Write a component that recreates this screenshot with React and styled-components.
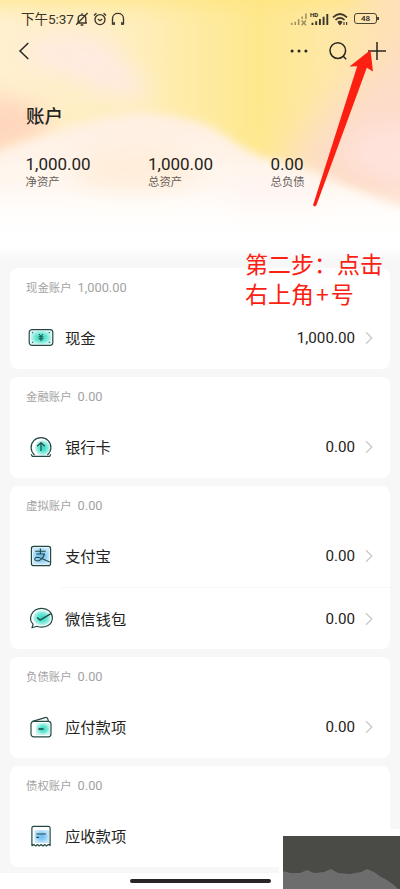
import styled, { createGlobalStyle } from 'styled-components';

const summary = [
  { value: '1,000.00', label: '净资产' },
  { value: '1,000.00', label: '总资产' },
  { value: '0.00', label: '总负债' },
];

const groups = [
  { title: '现金账户', total: '1,000.00', rows: [{ icon: 'cash', name: '现金', amount: '1,000.00' }] },
  { title: '金融账户', total: '0.00', rows: [{ icon: 'bank', name: '银行卡', amount: '0.00' }] },
  {
    title: '虚拟账户',
    total: '0.00',
    rows: [
      { icon: 'alipay', name: '支付宝', amount: '0.00' },
      { icon: 'wechat', name: '微信钱包', amount: '0.00' },
    ],
  },
  { title: '负债账户', total: '0.00', rows: [{ icon: 'wallet', name: '应付款项', amount: '0.00' }] },
  { title: '债权账户', total: '0.00', rows: [{ icon: 'receipt', name: '应收款项' }] },
];

const icons = {
  cash: (
    <>
      <rect x="3.5" y="6.5" width="21" height="14" rx="2" fill="url(#teal)" stroke="none" />
      <rect x="2.2" y="5.6" width="23.6" height="15.8" rx="2.8" />
      <path d="M12 10l2 2.4 2-2.4M11.6 12.8h4.8M11.6 14.8h4.8M14 12.6v4.6" strokeWidth="1" />
      <path d="M5.2 8.6h1M21.8 8.6h1M5.2 18.4h1M21.8 18.4h1" strokeWidth="1.3" />
    </>
  ),
  bank: (
    <>
      <circle cx="15.6" cy="14.8" r="7.6" fill="url(#teal)" stroke="none" />
      <path d="M7.6 22a9.9 9.9 0 1 1 12.8 0M4.2 21.2l1 2.1h17.6l1-2.1" />
      <path d="M14 18v-8M10.2 13.2l3.8-3.6 3.8 3.6" />
    </>
  ),
  alipay: (
    <>
      <rect x="5.5" y="5.5" width="17" height="17" fill="url(#blue)" stroke="none" />
      <rect x="4.4" y="4.4" width="19.2" height="19.2" rx="2.2" />
      <path d="M8.2 9.2h10.5M13.4 6.6v5.2M9.3 12h8.2c-1 3.4-4.2 7.2-7.5 7-3.3-.4-2.7-3.8.5-3.8 3.2.2 6.8 2.7 12.3 4.7" strokeWidth="1.1" />
    </>
  ),
  wechat: (
    <>
      <ellipse cx="15" cy="14" rx="9" ry="7.5" fill="url(#teal)" stroke="none" />
      <path d="M6.1 20.2C1 15 4 4.6 14.7 4.4c6.2 0 10.7 4.2 10.7 9.3 0 7.5-8 11.2-15.4 8.6L5 23.8z" />
      <path d="M10.2 13.4l2.8 2.7L24 9.6" strokeWidth="1.4" />
    </>
  ),
  wallet: (
    <>
      <rect x="9" y="10" width="14" height="12" rx="1.5" fill="url(#teal)" stroke="none" />
      <rect x="4" y="8.3" width="20" height="15.5" rx="2.8" />
      <path d="M5.5 8.4l12.7-3.8c1.4-.4 2.2.2 2.6 1.4l.6 2.2" />
      <path d="M11.5 16h5" strokeWidth="1.6" />
    </>
  ),
  receipt: (
    <>
      <rect x="7.5" y="8" width="14.5" height="13" rx="1" fill="url(#blue)" stroke="none" />
      <path d="M4.9 23.6V6.1c0-1.1.7-1.8 1.8-1.8h14.6c1.1 0 1.8.7 1.8 1.8v17.5l-1.8-1-1.8 1.3-1.8-1.3-1.8 1.3-1.8-1.3-1.8 1.3-1.8-1.3-1.8 1.3-1.8-1.3z" />
      <path d="M9.3 12h9.6M9.3 15.4h2.8" />
    </>
  ),
};

const HeaderArt = () => (
  <Art viewBox="0 0 400 268" preserveAspectRatio="none">
    <defs>
      <linearGradient id="base" x1="0" x2="1">
        <stop offset="0" stopColor="#fff0cf" />
        <stop offset=".34" stopColor="#ffeebc" />
        <stop offset=".5" stopColor="#feeba2" />
        <stop offset=".65" stopColor="#fee88e" />
        <stop offset=".82" stopColor="#fee8a6" />
        <stop offset="1" stopColor="#fee0b9" />
      </linearGradient>
      <linearGradient id="wave" x1="0" y1="110" x2="0" y2="240" gradientUnits="userSpaceOnUse">
        <stop offset="0" stopColor="#ffeee0" />
        <stop offset=".4" stopColor="#fff4ea" />
        <stop offset="1" stopColor="#fff" />
      </linearGradient>
      <linearGradient id="fade" x1="0" y1="185" x2="0" y2="250" gradientUnits="userSpaceOnUse">
        <stop offset="0" stopColor="#fff" stopOpacity="0" />
        <stop offset="1" stopColor="#fff" />
      </linearGradient>
      <linearGradient id="floor" x1="0" y1="247" x2="0" y2="262" gradientUnits="userSpaceOnUse">
        <stop offset="0" stopColor="#f7f7f7" stopOpacity="0" />
        <stop offset="1" stopColor="#f7f7f7" />
      </linearGradient>
      <filter id="b5" x="-50%" y="-50%" width="200%" height="200%"><feGaussianBlur stdDeviation="5" /></filter>
      <filter id="b12" x="-50%" y="-50%" width="200%" height="200%"><feGaussianBlur stdDeviation="12" /></filter>
      <filter id="b20" x="-50%" y="-50%" width="200%" height="200%"><feGaussianBlur stdDeviation="20" /></filter>
    </defs>
    <rect width="400" height="268" fill="url(#base)" />
    <path d="M-40-40h400V2H-40z" fill="#fee47a" opacity=".9" filter="url(#b12)" />
    <path d="M20 48Q85 12 118 50T150 100L100 95Q70 74 20 62z" fill="#ffebe0" filter="url(#b12)" />
    <path d="M-30 98Q10 92 34 108T50 134L-30 165z" fill="#ffd3bb" opacity=".9" filter="url(#b12)" />
    <path d="M440 45Q350 75 318 125T262 160L330 200 440 225z" fill="#fddccb" filter="url(#b20)" />
    <path d="M430 122Q345 128 345 150T430 196z" fill="#ffe3dc" filter="url(#b12)" />
    <path d="M-30 164Q35 136 90 121T190 120C225 126 235 151 275 161S345 186 430 218V300H-30z" fill="url(#wave)" filter="url(#b5)" />
    <ellipse cx="135" cy="170" rx="62" ry="22" fill="#ffead2" opacity=".7" filter="url(#b12)" />
    <ellipse cx="275" cy="192" rx="50" ry="18" fill="#fff4f1" filter="url(#b12)" />
    <rect y="185" width="400" height="83" fill="url(#fade)" />
    <rect y="247" width="400" height="21" fill="url(#floor)" />
  </Art>
);

const App = () => {
  return (
    <Screen>
      <GlobalStyle />
      <Defs>
        <radialGradient id="teal">
          <stop offset="0" stopColor="#2fdcc2" />
          <stop offset=".5" stopColor="#5fe5d2" />
          <stop offset="1" stopColor="#c9f6f0" />
        </radialGradient>
        <radialGradient id="blue">
          <stop offset="0" stopColor="#6bbcf2" />
          <stop offset=".55" stopColor="#8ecdf6" />
          <stop offset="1" stopColor="#c5e6fb" />
        </radialGradient>
      </Defs>
      <Header>
        <HeaderArt />
        <StatusBar>
          <Time>下午5:37</Time>
          <StatusLeft>
            <svg width="14" height="14" viewBox="0 0 14 14">
              <path d="M2 11h10M3.2 10.6V6.2C3.2 2 10.8 2 10.8 6.2v4.4M5.6 13h2.8M7 1.2v1.4M12.6 1L1.2 12.8" />
            </svg>
            <svg width="14" height="14" viewBox="0 0 14 14">
              <circle cx="7" cy="7.6" r="5" />
              <path d="M1 3.4L3.4 1.2M13 3.4l-2.4-2.2M4.9 7l2.1 1.7L9.3 7" />
            </svg>
            <svg width="14" height="14" viewBox="0 0 14 14">
              <path d="M3 12H1.5V6.6C1.5-.4 12.5-.4 12.5 6.6V12H11M3.2 10v3M10.8 10v3" />
            </svg>
          </StatusLeft>
          <StatusRight>
            <Signal $dim viewBox="0 0 18 14">
              <path d="M1.7 13v-2.3M5.2 13V9.7M8.6 13V7.2M12.2 7V4.5M15.9 7V1.5" />
              <path d="M11.6 8.6l4.4 4.6M16 8.6l-4.4 4.6" strokeWidth="1.2" />
            </Signal>
            <Carrier>
              <Hd>HD</Hd>
              <Signal viewBox="0 0 18 14">
                <path d="M1.5 13v-2.3M5.2 13V9.2M8.9 13V7M12.6 13V4.8M16.3 13V2" />
              </Signal>
            </Carrier>
            <svg width="17" height="14" viewBox="0 0 17 14">
              <path d="M1 5.3Q8-1.3 15 5.3M3.5 8Q8 3.8 12.5 8M6 10.5Q8 8.7 10 10.5" strokeWidth="1.7" />
              <path d="M7 11.2h2L8 12.5z" />
              <path d="M12 10v3M14.6 10v3" strokeWidth="1.1" />
            </svg>
            <Battery>48</Battery>
          </StatusRight>
        </StatusBar>
        <NavBar>
          <svg width="12" height="18" viewBox="0 0 12 18"><path d="M10.3 1L2 9l8.3 8" /></svg>
          <NavActions>
            <svg width="18" height="18" viewBox="0 0 18 18">
              <path d="M2.1 9h.01M9 9h.01M15.9 9h.01" strokeWidth="3" strokeLinecap="round" />
            </svg>
            <svg width="18" height="18" viewBox="0 0 18 18">
              <circle cx="8.8" cy="8.6" r="7.8" />
              <path d="M14 14l3.2 3.2" />
            </svg>
            <svg width="18" height="18" viewBox="0 0 18 18"><path d="M9 0v18M0 9h18" /></svg>
          </NavActions>
        </NavBar>
        <Title>账户</Title>
        <Summary>
          {summary.map((item) => (
            <div key={item.label}>
              <SummaryValue>{item.value}</SummaryValue>
              <SummaryLabel>{item.label}</SummaryLabel>
            </div>
          ))}
        </Summary>
      </Header>

      <Groups>
        {groups.map((group) => (
          <Card key={group.title}>
            <CardHead>
              {group.title}
              <span>{group.total}</span>
            </CardHead>
            {group.rows.map((row) => (
              <Row key={row.name}>
                <AccountIcon viewBox="0 0 28 28">{icons[row.icon]}</AccountIcon>
                <RowBody>
                  <Name>{row.name}</Name>
                  {row.amount && (
                    <>
                      <Amount>{row.amount}</Amount>
                      <Chevron viewBox="0 0 8 14"><path d="M1 1.3L6.8 7 1 12.7" /></Chevron>
                    </>
                  )}
                </RowBody>
              </Row>
            ))}
          </Card>
        ))}
      </Groups>
      <HomeArea>
        <HomeBar />
      </HomeArea>

      <Arrow viewBox="0 0 70 160">
        <path d="M60.5 1L63 22.5l-6.2-3.8L6.5 156q-1.6 2.6-3.5.3L47.2 17.2l-7.7.2z" />
      </Arrow>
      <Note>
        <span>第二步：点击</span>
        <span>右上角<Plus>+</Plus>号</span>
      </Note>
      <Thumb>
        <svg width="117" height="53" viewBox="0 0 117 53">
          <path d="M0 35l7 2h10l7-3 7 3 10-1 7-3 7 4 12 1 11-2 6-3 7 3 7 5 6 3 7 5 4 4H0z" />
        </svg>
      </Thumb>
    </Screen>
  );
};

const GlobalStyle = createGlobalStyle`
  * {
    box-sizing: border-box;
  }
  body {
    margin: 0;
    background: #fff;
    font-family: Roboto, 'Noto Sans CJK SC', sans-serif;
    color: #242321;
  }
  svg {
    display: block;
    flex: none;
  }
`;

const Screen = styled.main`
  position: relative;
  width: 400px;
  height: 889px;
  overflow: hidden;
  display: flex;
  flex-direction: column;
  background: #f7f7f7;
`;

const Defs = styled.svg`
  position: absolute;
  width: 0;
  height: 0;
`;

const Header = styled.header`
  position: relative;
  height: 268px;
  flex: none;
  isolation: isolate;
`;

const Art = styled.svg`
  position: absolute;
  inset: 0;
  width: 100%;
  height: 100%;
  z-index: -1;
`;

const StatusBar = styled.div`
  height: 36px;
  padding: 1px 19px 0 21px;
  display: flex;
  align-items: center;
  svg {
    fill: none;
    stroke: #3b3629;
    stroke-width: 1.35;
  }
`;

const Time = styled.span`
  width: 54px;
  padding-bottom: 1px;
  white-space: nowrap;
  font-size: 13.6px;
  letter-spacing: -0.1px;
  color: #3b3629;
`;

const StatusLeft = styled.div`
  display: flex;
  gap: 4px;
`;

const StatusRight = styled.div`
  margin-left: auto;
  display: flex;
  align-items: center;
  gap: 3px;
`;

const Signal = styled.svg`
  width: 18px;
  height: 14px;
  opacity: ${({ $dim }) => ($dim ? 0.5 : 1)};
  path {
    stroke-width: ${({ $dim }) => ($dim ? 1.5 : 1.9)};
  }
`;

const Carrier = styled.div`
  position: relative;
`;

const Hd = styled.span`
  position: absolute;
  left: -1px;
  top: 0;
  font-size: 6px;
  line-height: 6px;
  font-weight: 700;
`;

const Battery = styled.span`
  position: relative;
  width: 23px;
  height: 11px;
  margin: 0 4px 0 2px;
  border: 1.3px solid #4b4536;
  border-radius: 3px;
  font-size: 8px;
  font-weight: 500;
  line-height: 9px;
  text-align: center;
  &::after {
    content: '';
    position: absolute;
    right: -3px;
    top: 3px;
    width: 2px;
    height: 3px;
    background: #4b4536;
  }
`;

const NavBar = styled.nav`
  height: 30px;
  padding: 0 14px 0 18px;
  display: flex;
  align-items: center;
  justify-content: space-between;
  svg {
    fill: none;
    stroke: #292722;
    stroke-width: 1.5;
  }
`;

const NavActions = styled.div`
  display: flex;
  gap: 21px;
`;

const Title = styled.h1`
  margin: 37px 0 0 26px;
  font-size: 18.5px;
  line-height: 28px;
  font-weight: 500;
`;

const Summary = styled.div`
  margin: 23px 0 0 25.5px;
  display: grid;
  grid-template-columns: repeat(3, 122.5px);
`;

const SummaryValue = styled.div`
  font-size: 17px;
  line-height: 21px;
`;

const SummaryLabel = styled.div`
  font-size: 11.4px;
  line-height: 15px;
  color: #68625c;
`;

const Groups = styled.div`
  padding: 0 10px;
  display: flex;
  flex-direction: column;
  gap: 8px;
`;

const Card = styled.section`
  background: #fff;
  border-radius: 8px;
`;

const CardHead = styled.div`
  height: 39px;
  padding: 0 16px 2px;
  display: flex;
  align-items: center;
  gap: 6px;
  font-size: 11.4px;
  color: #a3a3a3;
  span {
    font-size: 12.8px;
    padding-top: 2px;
  }
`;

const Row = styled.div`
  height: 62px;
  padding-left: 17px;
  display: flex;
  align-items: center;
`;

const AccountIcon = styled.svg`
  width: 28px;
  height: 28px;
  margin-right: 5px;
  fill: none;
  stroke: #244944;
  stroke-width: 1.2;
  stroke-linejoin: round;
`;

const RowBody = styled.div`
  flex: 1;
  height: 100%;
  padding: 0 17px 0 5px;
  display: flex;
  align-items: center;
  ${Row} + ${Row} & {
    border-top: 1px solid #f8f8f8;
  }
`;

const Name = styled.span`
  flex: 1;
  padding-bottom: 2px;
  font-size: 15.3px;
`;

const Amount = styled.span`
  font-size: 15.2px;
`;

const Chevron = styled.svg`
  width: 8px;
  height: 14px;
  margin-left: 10px;
  fill: none;
  stroke: #cbcbcb;
  stroke-width: 1.4;
`;

const HomeArea = styled.footer`
  margin-top: auto;
  height: 16px;
  background: #fff;
  display: flex;
  justify-content: center;
  padding-top: 6px;
`;

const HomeBar = styled.div`
  width: 141px;
  height: 4px;
  border-radius: 2px;
  background: #292524;
`;

/* hand-drawn hint over the app */
const Arrow = styled.svg`
  position: absolute;
  left: 310px;
  top: 49px;
  width: 70px;
  height: 160px;
  fill: #fb2012;
`;

const Note = styled.p`
  position: absolute;
  left: 245px;
  top: 248px;
  margin: 0;
  white-space: nowrap;
  font-family: 'Noto Sans CJK SC', sans-serif;
  font-size: 23px;
  line-height: 30px;
  color: #fb2012;
  span {
    display: block;
  }
`;

const Plus = styled.b`
  margin: 0 2px;
  font-weight: 400;
`;

const Thumb = styled.div`
  position: absolute;
  right: 0;
  bottom: 0;
  padding: 7px 0 0 4px;
  background: #fff;
  svg {
    background: #4a4a47;
    fill: #6d6d6d;
  }
`;

export default App;
